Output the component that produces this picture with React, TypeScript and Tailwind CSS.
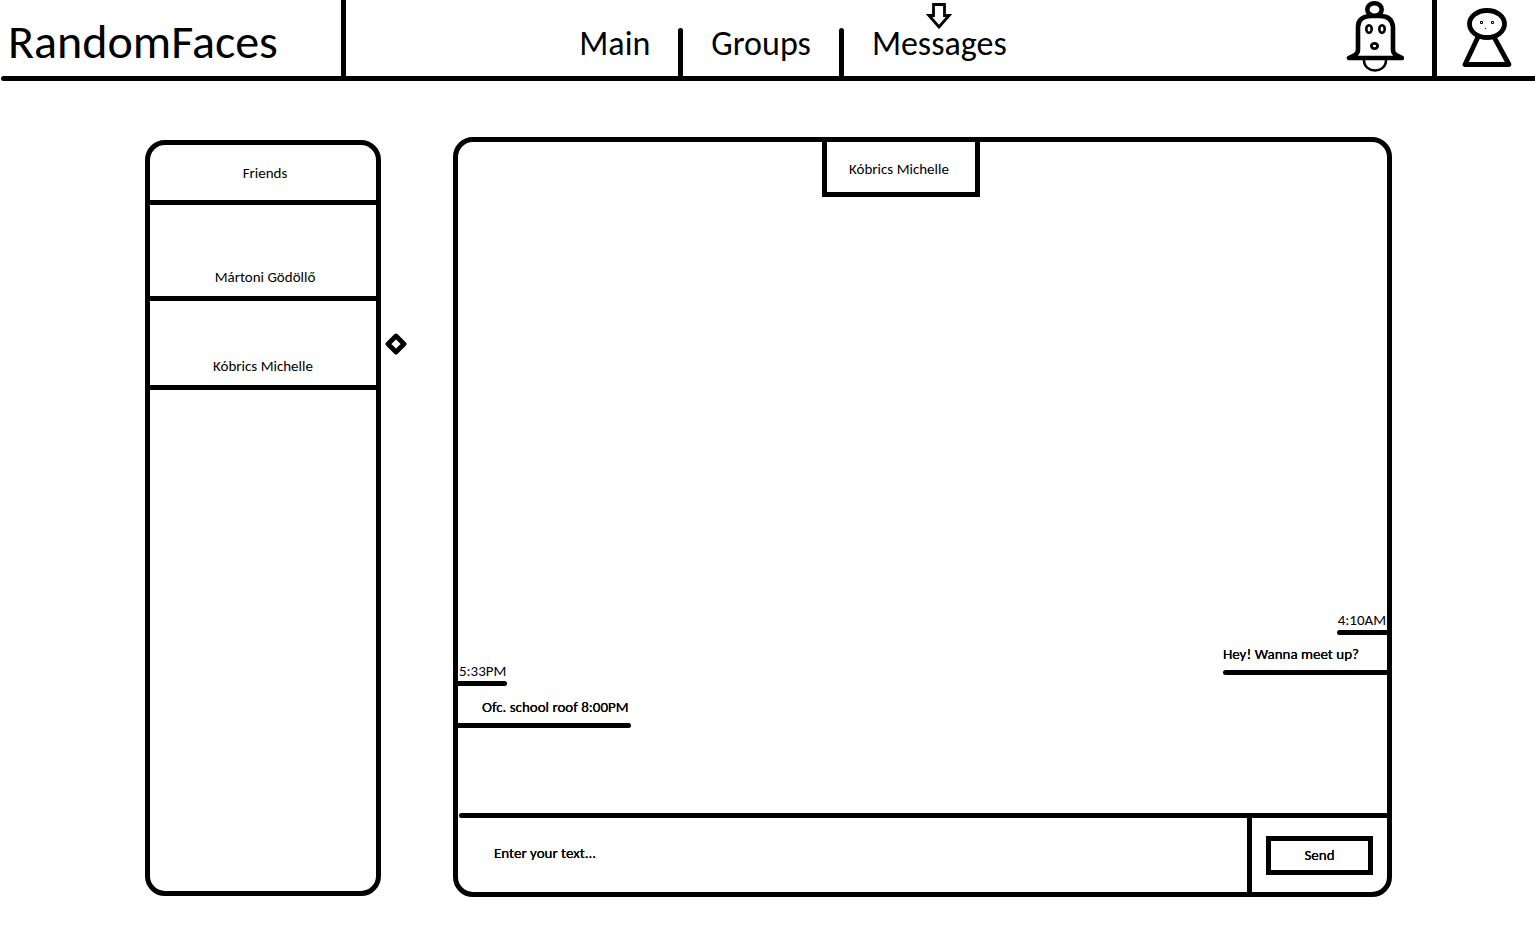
import React from "react";

function BellIcon() {
  return (
    <svg width="58" height="76" viewBox="0 0 58 76" fill="none" stroke="black" strokeLinecap="round" strokeLinejoin="round" aria-hidden="true">
      <path d="M18 60 C18 74 40 74 40 60" strokeWidth="2.5" />
      <path d="M3 58 H56 L50 55 Q47 53 47 50 V27 Q46 16 34 16 H24 Q12 17 12 27 V50 Q12 53 9 55 Z" fill="white" strokeWidth="4.6" />
      <ellipse cx="28.5" cy="9.5" rx="7.2" ry="6.2" fill="white" strokeWidth="4.6" />
      <ellipse cx="23" cy="29" rx="2.7" ry="3.8" strokeWidth="2.6" />
      <ellipse cx="36" cy="29" rx="2.7" ry="3.8" strokeWidth="2.6" />
      <ellipse cx="28.5" cy="46" rx="3.1" ry="2.6" strokeWidth="2.8" />
    </svg>
  );
}

function PersonIcon() {
  return (
    <svg width="52" height="76" viewBox="0 0 52 76" fill="none" stroke="black" strokeLinejoin="round" aria-hidden="true">
      <path d="M18 37 L5 64.5 H49 L34 37" strokeWidth="4.8" />
      <ellipse cx="27" cy="24" rx="17.5" ry="13.5" fill="white" strokeWidth="4.8" />
      <rect x="20.5" y="21.5" width="2" height="2" strokeWidth="1" />
      <rect x="31.5" y="21.5" width="2" height="2" strokeWidth="1" />
      <rect x="25" y="28" width="1" height="1" fill="black" stroke="none" />
    </svg>
  );
}

function DownArrow() {
  return (
    <svg className="absolute left-1/2 top-[3px] -translate-x-1/2" width="26" height="26" viewBox="0 0 26 26" fill="none" stroke="black" strokeWidth="2.8" aria-hidden="true">
      <path d="M7.5 1.5 H18.5 V12.5 H23 L13 24 L3 12.5 H7.5 Z" />
    </svg>
  );
}

function Diamond() {
  return (
    <svg className="absolute left-full top-8 ml-[9px]" width="22" height="22" viewBox="0 0 22 22" aria-hidden="true">
      <path d="M11 3 L19 11 L11 19 L3 11 Z" fill="none" stroke="black" strokeWidth="4.8" strokeLinejoin="round" />
    </svg>
  );
}

function NavLink({ label, current }: { label: string; current?: boolean }) {
  return (
    <a href="#" aria-current={current ? "page" : undefined} className="relative flex h-[76px] items-center px-7 pt-3 text-[34px] leading-10">
      {current && <DownArrow />}
      {label}
    </a>
  );
}

function NavDivider() {
  return <div className="h-12 w-[5px] rounded-t-full bg-black" />;
}

function Header() {
  return (
    <header>
      <div className="flex h-[76px] items-end">
        <div className="flex h-full w-[346px] items-center border-r-[5px] border-black pl-2 pt-2">
          <h1 className="text-[48px] leading-[52px]">RandomFaces</h1>
        </div>
        <nav className="flex flex-1 items-end justify-center">
          <NavLink label="Main" />
          <NavDivider />
          <NavLink label="Groups" />
          <NavDivider />
          <NavLink label="Messages" current />
        </nav>
        <div className="flex w-48 justify-end pr-7">
          <button type="button" aria-label="Notifications">
            <BellIcon />
          </button>
        </div>
        <div className="flex h-full w-[103px] justify-center border-l-[5px] border-black">
          <button type="button" aria-label="Profile">
            <PersonIcon />
          </button>
        </div>
      </div>
      <div className="ml-px h-[5px] rounded-l-full bg-black" />
    </header>
  );
}

function FriendsPanel() {
  return (
    <aside className="mb-px mt-[3px] w-[236px] shrink-0 rounded-[20px] border-[5px] border-black">
      <h2 className="flex h-[60px] items-center justify-center border-b-[5px] border-black pl-1">Friends</h2>
      <ul>
        <li className="border-b-[5px] border-black">
          <button type="button" className="flex h-[91px] w-full items-end justify-center pb-[9px] pl-1">
            Mártoni Gödöllő
          </button>
        </li>
        <li className="relative border-b-[5px] border-black">
          <button type="button" className="flex h-[84px] w-full items-end justify-center pb-[9px]">
            Kóbrics Michelle
          </button>
          <Diamond />
        </li>
      </ul>
    </aside>
  );
}

function Message({ time, text, mine }: { time: string; text: string; mine?: boolean }) {
  return (
    <div className={mine ? "flex flex-col items-end pb-[53px]" : "flex flex-col items-start"}>
      <div>
        <time className="block px-px leading-5">{time}</time>
        <div className={mine ? "h-[5px] rounded-l-full bg-black" : "h-[5px] rounded-r-full bg-black"} />
      </div>
      <div className="[text-shadow:0_0_0_#000]">
        <p className={mine ? "pb-1.5 pr-7 pt-[9px] leading-5" : "pb-1.5 pl-6 pr-0.5 pt-[11px] leading-5"}>{text}</p>
        <div className={mine ? "h-[5px] rounded-l-full bg-black" : "h-[5px] rounded-r-full bg-black"} />
      </div>
    </div>
  );
}

function Chat() {
  return (
    <section className="flex min-h-[760px] min-w-0 flex-1 flex-col rounded-[20px] border-[5px] border-black">
      <div className="flex justify-center pr-[43px]">
        <h2 className="flex h-[55px] w-[158px] items-center justify-center border-x-[5px] border-b-[5px] border-black pr-1 pt-1">Kóbrics Michelle</h2>
      </div>
      <div className="flex flex-1 items-end justify-between pb-[85px]">
        <Message time="5:33PM" text="Ofc. school roof 8:00PM" />
        <Message time="4:10AM" text="Hey! Wanna meet up?" mine />
      </div>
      <div className="ml-px h-[5px] rounded-l-full bg-black" />
      <form className="flex h-[74px] [text-shadow:0_0_0_#000]" onSubmit={(e) => e.preventDefault()}>
        <input
          type="text"
          aria-label="Message"
          placeholder="Enter your text..."
          className="min-w-0 flex-1 rounded-bl-2xl pb-1 pl-9 pr-4 outline-none [text-shadow:inherit] placeholder:text-black placeholder:opacity-100"
        />
        <div className="flex w-[140px] items-center border-l-[5px] border-black px-3.5">
          <button type="submit" className="h-[39px] w-full border-[5px] border-black leading-5 [text-shadow:inherit]">
            Send
          </button>
        </div>
      </form>
    </section>
  );
}

export default function App() {
  return (
    <div className="min-h-screen bg-white font-[Carlito,Calibri,Lato,sans-serif] text-[15px] leading-5 text-black">
      <Header />
      <main className="flex gap-[72px] pb-7 pl-[145px] pr-[143px] pt-14">
        <FriendsPanel />
        <Chat />
      </main>
    </div>
  );
}
